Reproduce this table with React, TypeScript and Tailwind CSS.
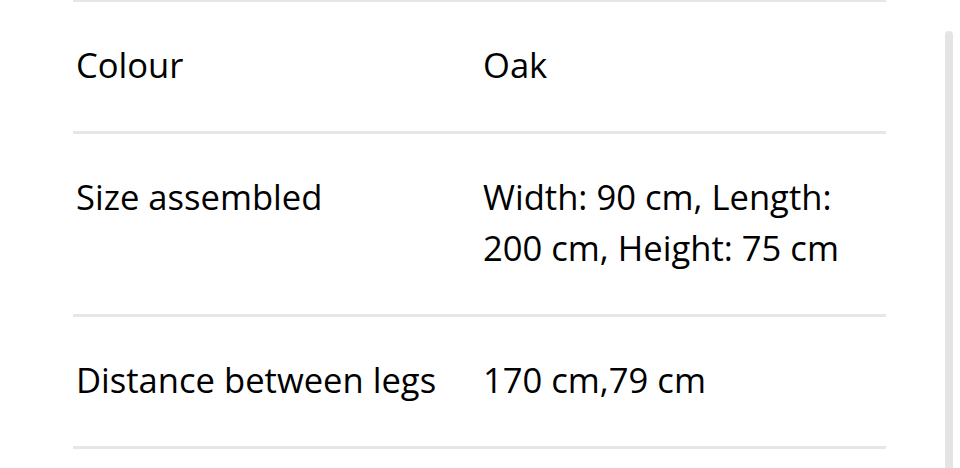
const rows: { label: string; value: string }[] = [
  { label: "Colour", value: "Oak" },
  { label: "Size assembled", value: "Width: 90 cm, Length: 200 cm, Height: 75 cm" },
  { label: "Distance between legs", value: "170 cm,79 cm" },
];

export default function App() {
  return (
    <div className="relative h-[468px] w-[960px] overflow-hidden bg-white font-['Open_Sans',sans-serif] text-black">
      <div className="-mt-[1px] ml-[73px] w-[813px]">
        {rows.map((r) => (
          <div key={r.label} className="grid grid-cols-[410px_1fr] border-t-[3px] border-[#e6e6e6] pt-[37px] pb-[41px] text-[34.6px] font-medium leading-[51px]">
            <div className="pl-[3px]">{r.label}</div>
            <div>{r.value}</div>
          </div>
        ))}
        <div className="border-t-[3px] border-[#e6e6e6]" />
      </div>
      {/* scrollbar */}
      <div className="absolute left-[945px] top-[31px] h-[460px] w-[8px] rounded-t-full bg-[#e4e4e4]" />
    </div>
  );
}
